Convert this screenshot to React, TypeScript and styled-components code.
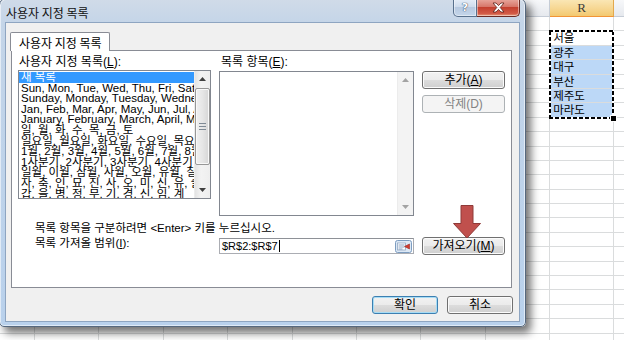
import React from 'react';
import styled, { createGlobalStyle } from 'styled-components';

const GlobalStyle = createGlobalStyle`
  html, body {
    margin: 0;
    padding: 0;
  }
  body {
    font-family: 'Liberation Sans', 'Noto Sans CJK KR', sans-serif;
    font-size: 12px;
    color: #000;
    background: #fff;
  }
  * {
    box-sizing: border-box;
  }
`;

const COLS = ['I', 'J', 'K', 'L', 'M', 'N', 'O', 'P', 'Q', 'R', 'S'];
const ROW_COUNT = 23;
const rangeValues = ['서울', '광주', '대구', '부산', '제주도', '마라도'];

const customLists = [
  '새 목록',
  'Sun, Mon, Tue, Wed, Thu, Fri, Sat',
  'Sunday, Monday, Tuesday, Wednesday, Thursday, Friday, Saturday',
  'Jan, Feb, Mar, Apr, May, Jun, Jul, Aug, Sep, Oct, Nov, Dec',
  'January, February, March, April, May, June, July, August',
  '일, 월, 화, 수, 목, 금, 토',
  '일요일, 월요일, 화요일, 수요일, 목요일, 금요일, 토요일',
  '1월, 2월, 3월, 4월, 5월, 6월, 7월, 8월, 9월, 10월',
  '1사분기, 2사분기, 3사분기, 4사분기',
  '일월, 이월, 삼월, 사월, 오월, 유월, 칠월, 팔월',
  '자, 축, 인, 묘, 진, 사, 오, 미, 신, 유, 술, 해',
  '갑, 을, 병, 정, 무, 기, 경, 신, 임, 계'
];

const Screen = styled.div`
  position: relative;
  width: 624px;
  height: 340px;
  overflow: hidden;
  background: #fff;
`;

/* spreadsheet behind the dialog */
const Sheet = styled.div`
  display: grid;
  grid-template-columns: 35px repeat(8, 64.4px) 64px 64px;
  grid-template-rows: 17px repeat(${ROW_COUNT}, 14.4px);
  width: 680px;
  height: 340px;
`;

const ColHeader = styled.div<{ $col: number; $active?: boolean }>`
  grid-row: 1;
  grid-column: ${({ $col }) => $col};
  border-right: 1px solid ${({ $active }) => ($active ? '#e3a94d' : '#c5ccd6')};
  border-bottom: 1px solid ${({ $active }) => ($active ? '#f29436' : '#c5ccd6')};
  background: ${({ $active }) =>
    $active ? 'linear-gradient(#fae6b4, #f6d58e 60%, #f3c96f)' : 'linear-gradient(#f7f8fa, #e6e9ee)'};
  font-family: 'Liberation Serif', serif;
  font-size: 13px;
  line-height: 16px;
  text-align: center;
  color: #3b3b3b;
`;

const Cell = styled.div<{ $row: number; $col: number; $selected?: boolean }>`
  grid-row: ${({ $row }) => $row};
  grid-column: ${({ $col }) => $col};
  border-right: 1px solid #dadcdd;
  border-bottom: 1px solid #dadcdd;
  background: ${({ $selected }) => ($selected ? '#bcd8f7' : '#fff')};
  font-family: 'Noto Sans CJK KR', sans-serif;
  font-size: 11.5px;
  line-height: 13px;
  padding-left: 3px;
  white-space: nowrap;
`;

const Marquee = styled.div`
  grid-row: 3 / 9;
  grid-column: 10;
  position: relative;
  margin: -1px 0 -1px -1px;
  background:
    repeating-linear-gradient(90deg, #000 0 4px, #fff 4px 6px) top / 100% 2px no-repeat,
    repeating-linear-gradient(90deg, #000 0 4px, #fff 4px 6px) bottom / 100% 2px no-repeat,
    repeating-linear-gradient(0deg, #000 0 4px, #fff 4px 6px) left / 2px 100% no-repeat,
    repeating-linear-gradient(0deg, #000 0 4px, #fff 4px 6px) right / 2px 100% no-repeat;

  &::after {
    content: '';
    position: absolute;
    right: -3px;
    bottom: -3px;
    width: 5px;
    height: 5px;
    background: #000;
    border: 1px solid #fff;
  }
`;

/* dialog window */
const Dialog = styled.div`
  position: absolute;
  left: -1px;
  top: -2px;
  width: 527px;
  height: 329px;
  display: flex;
  flex-direction: column;
  padding: 0 5px 4px 5px;
  border: 1px solid #56687e;
  border-radius: 7px 7px 5px 5px;
  background: linear-gradient(180deg, #d0dbe8 0px, #c4d5e8 24px, #b9d1ec 100%);
  box-shadow: 5px 6px 9px rgba(0, 0, 0, 0.55), inset 0 0 0 1px rgba(255, 255, 255, 0.55);
`;

const TitleBar = styled.div`
  height: 23px;
  display: flex;
  align-items: flex-start;
`;

const Title = styled.div`
  padding: 7px 0 0 1px;
  font-family: 'Noto Sans CJK KR', sans-serif;
  font-size: 12px;
  line-height: 14px;
  color: #111;
`;

const CaptionButtons = styled.div`
  display: flex;
  margin-left: auto;
  height: 18px;
`;

const CaptionButton = styled.div<{ $close?: boolean }>`
  width: ${({ $close }) => ($close ? '43px' : '24px')};
  height: 18px;
  display: flex;
  align-items: center;
  justify-content: center;
  border: 1px solid ${({ $close }) => ($close ? '#6b2b24' : '#58708c')};
  border-top: none;
  border-left: ${({ $close }) => ($close ? 'none' : undefined)};
  border-radius: ${({ $close }) => ($close ? '0 0 5px 0' : '0 0 0 5px')};
  background: ${({ $close }) =>
    $close
      ? 'linear-gradient(#e9a99f 0%, #d7776a 45%, #c4402f 50%, #d25a46 85%, #e89a79 100%)'
      : 'linear-gradient(#e6eef8 0%, #cfdcec 45%, #b7c9e0 50%, #c4d6ea 100%)'};
  box-shadow: inset 0 0 0 1px rgba(255, 255, 255, 0.45);
`;

const HelpGlyph = styled.span`
  font-family: 'DejaVu Sans', sans-serif;
  font-weight: bold;
  font-size: 11px;
  line-height: 12px;
  color: #fff;
  text-shadow: 0 0 1px #2d3f57, 0 0 1px #2d3f57;
`;

const Body = styled.div`
  flex: 1;
  display: flex;
  flex-direction: column;
  padding: 9px 6px 6px 5px;
  background: #f0f0f0;
  border: 1px solid #8ea5c1;
`;

const TabStrip = styled.div`
  display: flex;
  margin-left: -1px;
`;

const Tab = styled.div`
  position: relative;
  z-index: 1;
  width: 100px;
  height: 19px;
  margin-bottom: -1px;
  padding: 3px 0 0 8px;
  background: #fff;
  border: 1px solid #898c95;
  border-bottom: none;
  border-radius: 2px 2px 0 0;
  font-family: 'Noto Sans CJK KR', sans-serif;
  font-size: 12px;
  line-height: 14px;
`;

const TabPanel = styled.div`
  height: 238px;
  margin-right: 1px;
  padding: 4px 0 0 6px;
  background: #fff;
  border: 1px solid #898c95;
  display: grid;
  grid-template-columns: 193px 195px 83px;
  grid-template-rows: 15px 146px 20px 19px;
  column-gap: 8px;
`;

const Label = styled.div<{ $indent?: number; $small?: boolean }>`
  padding-left: ${({ $indent }) => $indent ?? 1}px;
  font-size: ${({ $small }) => ($small ? 11.5 : 12)}px;
  line-height: 14px;
  white-space: nowrap;
`;

const HintText = styled(Label)`
  grid-column: 1 / 4;
  padding-top: 5px;
  font-size: 11.5px;
`;

const ListBox = styled.div<{ $height: number; $offset?: number }>`
  align-self: start;
  height: ${({ $height }) => $height}px;
  margin-top: ${({ $offset }) => $offset ?? 0}px;
  display: flex;
  background: #fff;
  border: 1px solid #828790;
`;

const Items = styled.div`
  flex: 1;
  min-width: 0;
  overflow: hidden;
  padding-top: 1px;
`;

const Item = styled.div<{ $selected?: boolean }>`
  height: 10.6px;
  padding-left: 2px;
  font-size: 11.5px;
  line-height: 10.6px;
  white-space: nowrap;
  background: ${({ $selected }) => ($selected ? '#3399ff' : 'transparent')};
  color: ${({ $selected }) => ($selected ? '#fff' : '#000')};
`;

const ScrollBar = styled.div<{ $disabled?: boolean }>`
  width: 16px;
  display: flex;
  flex-direction: column;
  background: ${({ $disabled }) => ($disabled ? '#f3f3f3' : 'linear-gradient(90deg, #e3e3e3, #f3f3f3 40%, #eeeeee)')};
  border-left: 1px solid #ececec;
`;

const ArrowButton = styled.div`
  height: 16px;
  display: flex;
  align-items: center;
  justify-content: center;
`;

const Track = styled.div`
  flex: 1;
  display: flex;
  flex-direction: column;
`;

const Thumb = styled.div<{ $height: number }>`
  height: ${({ $height }) => $height}px;
  margin: 1px 0 0 0;
  display: flex;
  flex-direction: column;
  align-items: center;
  justify-content: center;
  gap: 2px;
  border: 1px solid #979797;
  border-radius: 2px;
  background: linear-gradient(90deg, #f1f1f1, #e6e6e6 50%, #d6d6d6);
  box-shadow: inset 0 0 0 1px #f9f9f9;
`;

const Grip = styled.span`
  width: 7px;
  height: 1px;
  background: #7f8a95;
`;

const ButtonColumn = styled.div`
  align-self: start;
  margin-top: 1px;
  display: flex;
  flex-direction: column;
  gap: 6px;
`;

const Button = styled.button<{ $narrow?: boolean; $default?: boolean }>`
  width: ${({ $narrow }) => ($narrow ? 66 : 83)}px;
  height: 18px;
  padding: 0;
  border: 1px solid ${({ $default }) => ($default ? '#3c7fb1' : '#707070')};
  border-radius: 3px;
  background: linear-gradient(#f2f2f2 0%, #ebebeb 50%, #dddddd 50%, #cfcfcf 100%);
  box-shadow: inset 0 0 0 1px ${({ $default }) => ($default ? '#a6dcf5' : '#fbfbfb')};
  font-family: 'Liberation Sans', 'Noto Sans CJK KR', sans-serif;
  font-size: 12px;
  line-height: 15px;
  color: #000;

  &:disabled {
    border-color: #adb2b5;
    background: #f4f4f4;
    box-shadow: none;
    color: #838383;
  }
`;

const RangeRow = styled.div`
  display: contents;
`;

const RangeInput = styled.div`
  height: 16px;
  margin-top: 2px;
  display: flex;
  align-items: center;
  padding: 0 1px 0 2px;
  background: #fff;
  border: 1px solid #abadb3;
  border-top-color: #8e9197;
`;

const InputText = styled.span`
  font-size: 11px;
  line-height: 14px;
  white-space: nowrap;
`;

const Caret = styled.span`
  width: 1px;
  height: 12px;
  margin-left: 1px;
  background: #000;
`;

const RangeButton = styled.div`
  margin-left: auto;
  display: flex;
`;

const ImportButton = styled(Button)`
  margin-top: 1px;
`;

const Footer = styled.div`
  display: flex;
  justify-content: flex-end;
  gap: 9px;
  margin-top: 8px;
`;

const Annotation = styled.svg`
  position: absolute;
  left: 452px;
  top: 205px;
`;

const UpArrow = ({ color = '#404040' }: { color?: string }) => (
  <svg width="7" height="4" viewBox="0 0 7 4">
    <path d="M0 4 L3.5 0 L7 4 Z" fill={color} />
  </svg>
);

const DownArrow = ({ color = '#404040' }: { color?: string }) => (
  <svg width="7" height="4" viewBox="0 0 7 4">
    <path d="M0 0 L3.5 4 L7 0 Z" fill={color} />
  </svg>
);

const CloseGlyph = () => (
  <svg width="13" height="11" viewBox="0 0 13 11">
    <path
      d="M1 1 L4 1 L6.5 3.6 L9 1 L12 1 L8.2 5.5 L12 10 L9 10 L6.5 7.4 L4 10 L1 10 L4.8 5.5 Z"
      fill="#fff"
      stroke="#5a1f18"
      strokeWidth="0.8"
      strokeLinejoin="round"
    />
  </svg>
);

const CollapseIcon = () => (
  <svg width="17" height="13" viewBox="0 0 17 13">
    <rect x="0.5" y="0.5" width="16" height="12" rx="2" fill="#dce8f5" stroke="#7d9dc0" />
    <rect x="2.5" y="3" width="8" height="7" fill="#fff" stroke="#93a9c3" strokeWidth="0.8" />
    <path d="M3.5 5h6M3.5 7h6M3.5 9h4" stroke="#6e8db3" strokeWidth="0.8" />
    <path d="M14.5 4 L9.5 6.5 L14.5 9 Z" fill="#d23b2e" stroke="#9e2a21" strokeWidth="0.6" />
  </svg>
);

const App = () => (
  <Screen>
    <GlobalStyle />
    <Sheet>
      {COLS.map((name, i) => (
        <ColHeader key={name} $col={i + 1} $active={name === 'R'}>
          {name}
        </ColHeader>
      ))}
      {Array.from({ length: ROW_COUNT }, (_, r) =>
        COLS.map((name, c) => {
          const row = r + 2;
          const value = name === 'R' && r >= 1 && r <= 6 ? rangeValues[r - 1] : '';
          return (
            <Cell key={`${name}${row}`} $row={row} $col={c + 1} $selected={name === 'R' && r >= 2 && r <= 6}>
              {value}
            </Cell>
          );
        })
      )}
      <Marquee />
    </Sheet>

    <Dialog>
      <TitleBar>
        <Title>사용자 지정 목록</Title>
        <CaptionButtons>
          <CaptionButton>
            <HelpGlyph>?</HelpGlyph>
          </CaptionButton>
          <CaptionButton $close>
            <CloseGlyph />
          </CaptionButton>
        </CaptionButtons>
      </TitleBar>

      <Body>
        <TabStrip>
          <Tab>사용자 지정 목록</Tab>
        </TabStrip>
        <TabPanel>
          <Label>
            사용자 지정 목록(<u>L</u>):
          </Label>
          <Label $indent={2}>
            목록 항목(<u>E</u>):
          </Label>
          <div />

          <ListBox $height={129}>
            <Items>
              {customLists.map((text, i) => (
                <Item key={text} $selected={i === 0}>
                  {text}
                </Item>
              ))}
            </Items>
            <ScrollBar>
              <ArrowButton>
                <UpArrow />
              </ArrowButton>
              <Track>
                <Thumb $height={77}>
                  <Grip />
                  <Grip />
                  <Grip />
                </Thumb>
              </Track>
              <ArrowButton>
                <DownArrow />
              </ArrowButton>
            </ScrollBar>
          </ListBox>
          <ListBox $height={145} $offset={1}>
            <Items />
            <ScrollBar $disabled>
              <ArrowButton>
                <UpArrow color="#a3a3a3" />
              </ArrowButton>
              <Track />
              <ArrowButton>
                <DownArrow color="#a3a3a3" />
              </ArrowButton>
            </ScrollBar>
          </ListBox>
          <ButtonColumn>
            <Button>
              추가(<u>A</u>)
            </Button>
            <Button disabled>삭제(D)</Button>
          </ButtonColumn>

          <HintText $indent={17}>목록 항목을 구분하려면 &lt;Enter&gt; 키를 누르십시오.</HintText>

          <RangeRow>
            <Label $indent={17} $small>
              목록 가져올 범위(<u>I</u>):
            </Label>
            <RangeInput>
              <InputText>$R$2:$R$7</InputText>
              <Caret />
              <RangeButton>
                <CollapseIcon />
              </RangeButton>
            </RangeInput>
            <ImportButton>
              가져오기(<u>M</u>)
            </ImportButton>
          </RangeRow>
        </TabPanel>

        <Footer>
          <Button $narrow $default>
            확인
          </Button>
          <Button $narrow>취소</Button>
        </Footer>
      </Body>
    </Dialog>

    <Annotation width="30" height="34" viewBox="0 0 30 34">
      <path d="M9 0.5 H21 V18.5 H28.5 L15 33 L1.5 18.5 H9 Z" fill="#c0504d" stroke="#8f3a38" strokeWidth="1" />
    </Annotation>
  </Screen>
);

export default App;
